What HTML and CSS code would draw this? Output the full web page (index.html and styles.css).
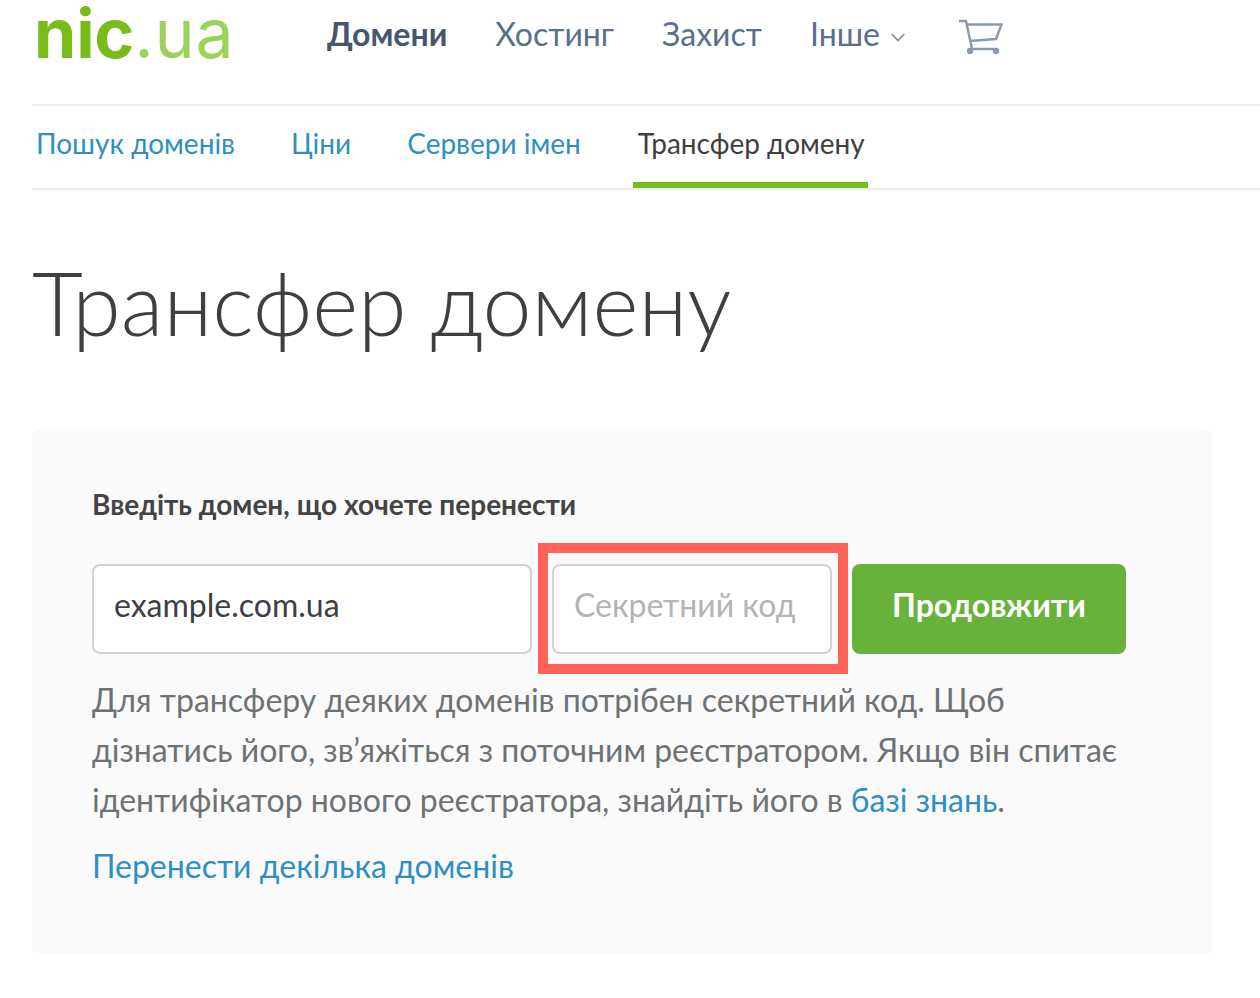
FILE: index.html
```html
<!DOCTYPE html>
<html lang="uk">
<head>
<meta charset="utf-8">
<title>Трансфер домену</title>
<link rel="stylesheet" href="styles.css">
</head>
<body>
<div class="page">
  <header class="topbar">
    <a class="logo"><span class="logo-dark">nic</span><span class="logo-light">.ua</span></a>
    <nav class="mainnav">
      <a class="mainnav-item is-active">Домени</a>
      <a class="mainnav-item">Хостинг</a>
      <a class="mainnav-item">Захист</a>
      <a class="mainnav-item">Інше
        <svg class="chevron" width="14" height="9" viewBox="0 0 14 9"><path d="M.7 1l6.3 6.5L13.300 1" fill="none" stroke="#7f8ea3" stroke-width="1.700"/></svg>
      </a>
      <svg class="cart" width="46" height="36" viewBox="0 0 46 36"><path d="M1 3H8L14 31H38M9 6.500H43.500L38 21L11 23" fill="none" stroke="#8c99ad" stroke-width="2.400"/><circle cx="12" cy="33" r="3.200" fill="#8c99ad"/><circle cx="38" cy="33" r="3.200" fill="#8c99ad"/></svg>
    </nav>
  </header>
  <nav class="subnav">
    <a class="subnav-item">Пошук доменів</a>
    <a class="subnav-item">Ціни</a>
    <a class="subnav-item">Сервери імен</a>
    <a class="subnav-item is-current">Трансфер домену</a>
  </nav>
  <h1 class="title">Трансфер домену</h1>
  <section class="card">
    <div class="card-label">Введіть домен, що хочете перенести</div>
    <form class="form-row">
      <input class="field field-domain" type="text" value="example.com.ua">
      <div class="code-wrap">
        <input class="field field-code" type="text" placeholder="Секретний код">
        <span class="highlight"></span>
      </div>
      <button class="submit" type="button">Продовжити</button>
    </form>
    <p class="help">Для трансферу деяких доменів потрібен секретний код. Щоб дізнатись його, зв’яжіться з поточним реєстратором. Якщо він спитає ідентифікатор нового реєстратора, знайдіть його в <a class="link">базі знань</a>.</p>
    <a class="link multi">Перенести декілька доменів</a>
  </section>
</div>
</body>
</html>
```
FILE: styles.css
```css
* { box-sizing: border-box; }
html, body { margin: 0; padding: 0; background: #fff; }
body { font-family: Lato, "Noto Sans", sans-serif; overflow: hidden; height: 998px; }
.page { padding-left: 32px; }
.topbar { display: flex; align-items: flex-start; height: 106px; border-bottom: 2px solid #ececec; }
.logo { width: 295px; padding-left: 2px; font-family: "Inter", "Liberation Sans", sans-serif; font-size: 68px; line-height: 66px; white-space: nowrap; }
.logo-dark { display: inline-block; color: #78bc1a; font-weight: 700; letter-spacing: -0.2px; }
.logo-light { display: inline-block; color: #9bd25a; font-weight: 400; letter-spacing: 0.8px; }
.mainnav { display: flex; align-items: center; height: 66px; }
.mainnav-item { font-size: 32px; color: #5a6f8c; margin-right: 48px; display: flex; align-items: center; }
.mainnav-item.is-active { font-weight: 700; color: #46566e; }
.chevron { margin-left: 11px; margin-top: 8px; }
.cart { margin-left: 5px; margin-top: 6px; }
.subnav { display: flex; height: 84px; border-bottom: 2px solid #ececec; }
.subnav-item { font-size: 28px; color: #2e8fc4; padding: 0 4px; margin-right: 48px; line-height: 74px; height: 82px; }
.subnav-item.is-current { color: #3f3f3f; border-bottom: 6px solid #78bc1a; padding: 0 3px 0 5px; }
.title { margin: 54px 0 0; font-weight: 300; font-size: 88px; line-height: 116px; color: #3f3f3f; height: 185px; }
.card { width: 1180px; height: 525px; background: #fafafa; border-radius: 8px; padding: 56px 60px 0; }
.card-label { font-size: 28px; font-weight: 700; color: #444; line-height: 38px; margin-bottom: 41px; }
.form-row { display: flex; }
.field { height: 90px; border: 2px solid #d2d2d2; border-radius: 8px; background: #fff; font: 400 32px Lato, "Noto Sans", sans-serif; color: #3c4043; padding: 0 20px 10px; outline: none; }
.field-domain { width: 440px; margin-right: 20px; }
.code-wrap { position: relative; margin-right: 20px; }
.field-code { width: 280px; display: block; }
.field-code::placeholder { color: #b4b4b4; opacity: 1; }
.highlight { position: absolute; left: -14px; top: -21px; width: 310px; height: 131px; border: 10px solid #ff6259; pointer-events: none; }
.submit { width: 274px; height: 90px; border: 0; border-radius: 8px; background: #68b23c; color: #fff; font: 700 32px Lato, "Noto Sans", sans-serif; padding: 0 0 10px; }
.help { margin: 21px 0 0; width: 1040px; font-size: 32px; line-height: 50px; color: #6d7275; }
.link { color: #2e8fc4; }
.multi { display: block; margin-top: 16px; font-size: 32px; line-height: 50px; }
```
